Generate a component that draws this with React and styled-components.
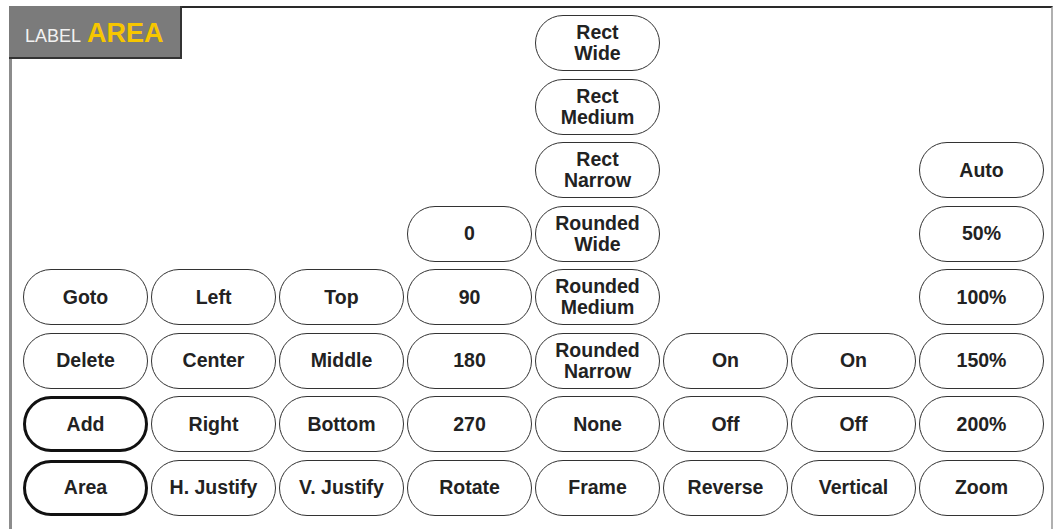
import React from 'react'
import styled, { createGlobalStyle } from 'styled-components'

const GlobalStyle = createGlobalStyle`
  html, body {
    margin: 0;
    padding: 0;
    background: #fff;
    overflow: hidden;
  }
  body {
    font-family: "Liberation Sans", Arial, sans-serif;
  }
`

const Frame = styled.div`
  margin: 6px 0 0 9px;
  width: 1044px;
  height: 540px;
  box-sizing: border-box;
  border-top: 2px solid #2a2a2a;
  border-left: 3px solid #8c8c8c;
  border-right: 2px solid #b0b0b0;
  padding: 7px 0 0 11px;
  display: grid;
  grid-template-columns: repeat(8, 125px);
  grid-template-rows: repeat(8, 56px);
  column-gap: 3px;
  row-gap: 7.5px;
  align-content: start;
`

const Label = styled.div`
  grid-column: 1 / 3;
  grid-row: 1;
  justify-self: start;
  align-self: start;
  margin: -9px 0 0 -14px;
  width: 173px;
  height: 53px;
  box-sizing: border-box;
  background: #7b7b7b;
  border-right: 2px solid #333;
  border-bottom: 2px solid #333;
  display: flex;
  align-items: baseline;
  gap: 6px;
  padding: 14px 0 0 16px;
  line-height: 1;
`

const LabelSmall = styled.span`
  color: #f2f2f2;
  font-size: 18px;
`

const LabelBig = styled.span`
  color: #f7c600;
  font-size: 27px;
  font-weight: 700;
`

const Key = styled.div`
  grid-column: ${p => p.$col};
  grid-row: ${p => p.$row};
  box-sizing: border-box;
  border: ${p => (p.$strong ? '3px solid #111' : '1.5px solid #333')};
  border-radius: 28px;
  display: flex;
  align-items: center;
  justify-content: center;
  text-align: center;
  color: #222;
  font-size: 19.5px;
  font-weight: 700;
  line-height: 21px;
  white-space: pre-line;
`

const columns = [
  { start: 5, keys: ['Goto', 'Delete', 'Add', 'Area'], strong: ['Add', 'Area'] },
  { start: 5, keys: ['Left', 'Center', 'Right', 'H. Justify'] },
  { start: 5, keys: ['Top', 'Middle', 'Bottom', 'V. Justify'] },
  { start: 4, keys: ['0', '90', '180', '270', 'Rotate'] },
  {
    start: 1,
    keys: [
      'Rect\nWide',
      'Rect\nMedium',
      'Rect\nNarrow',
      'Rounded\nWide',
      'Rounded\nMedium',
      'Rounded\nNarrow',
      'None',
      'Frame',
    ],
  },
  { start: 6, keys: ['On', 'Off', 'Reverse'] },
  { start: 6, keys: ['On', 'Off', 'Vertical'] },
  { start: 3, keys: ['Auto', '50%', '100%', '150%', '200%', 'Zoom'] },
]

const App = () => {
  return (
    <>
      <GlobalStyle />
      <Frame>
        <Label>
          <LabelSmall>LABEL</LabelSmall>
          <LabelBig>AREA</LabelBig>
        </Label>
        {columns.map((c, ci) =>
          c.keys.map((k, ki) => (
            <Key
              key={ci + '-' + ki}
              $col={ci + 1}
              $row={c.start + ki}
              $strong={c.strong && c.strong.includes(k)}
            >
              {k}
            </Key>
          ))
        )}
      </Frame>
    </>
  )
}

export default App
